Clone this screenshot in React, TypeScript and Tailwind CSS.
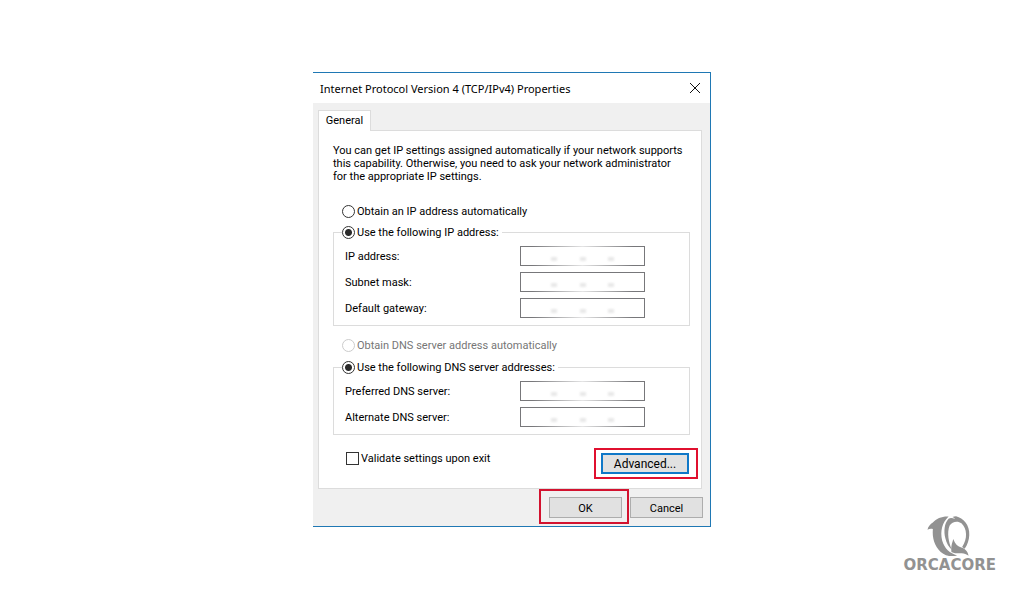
import { useState } from "react";
import clsx from "clsx";

type Smudge = "top" | "bottom" | "both";

interface FieldProps {
  id: string;
  label: string;
  smudge: Smudge;
}

const smudgeStyle =
  "pointer-events-none absolute h-[3px] bg-linear-to-r from-white/0 via-white/80 to-white/0";

const AddressField = ({ id, label, smudge }: FieldProps) => {
  const [value, setValue] = useState("");

  return (
    <div className="flex h-5 items-center">
      <label htmlFor={id} className="w-[175px]">
        {label}
      </label>
      <div className="relative h-5 w-[125px]">
        <input
          id={id}
          type="text"
          value={value}
          onChange={(e) => setValue(e.target.value)}
          className="block h-5 w-full border border-[#77777a] bg-white px-1 outline-none"
        />
        {/* erased octets */}
        <span className="pointer-events-none absolute inset-x-[31px] top-[11px] flex justify-between">
          <i className="h-1 w-1.5 bg-[#e8e8e8] blur-[1px]" />
          <i className="h-1 w-1.5 bg-[#e8e8e8] blur-[1px]" />
          <i className="h-1 w-1.5 bg-[#e8e8e8] blur-[1px]" />
        </span>
        {smudge !== "bottom" && (
          <span className={clsx(smudgeStyle, "inset-x-3 -top-px")} />
        )}
        {smudge !== "top" && (
          <span className={clsx(smudgeStyle, "inset-x-3 -bottom-px")} />
        )}
      </div>
    </div>
  );
};

interface RadioProps {
  id: string;
  name: string;
  label: string;
  defaultChecked?: boolean;
  disabled?: boolean;
}

const Radio = ({ id, name, label, defaultChecked, disabled }: RadioProps) => (
  <span className="flex h-3.5 items-center gap-0.5">
    <input
      id={id}
      name={name}
      type="radio"
      defaultChecked={defaultChecked}
      disabled={disabled}
      className="h-[13px] w-[13px] shrink-0 appearance-none rounded-full border border-[#333] bg-white checked:bg-[radial-gradient(circle,#2b2b2b_3px,transparent_4px)] disabled:border-[#ccc]"
    />
    <label
      htmlFor={id}
      className={clsx("whitespace-nowrap", disabled && "text-[#767676]")}
    >
      {label}
    </label>
  </span>
);

const Logo = () => (
  <div className="flex flex-col items-center text-[#929292]">
    <svg viewBox="0 0 168 137" className="h-[49px] w-15" fill="currentColor">
      <path d="M80 21C62 20 46 26 36 38C29 42 23 49 21 58C26 55 31 55 36 56C34 80 40 104 58 120C70 131 88 134 104 130C84 124 68 110 62 88C56 62 62 38 80 21Z" />
      <path d="M80 27C68 40 66 62 71 82C74 96 81 107 89 114C80 92 75 66 83 46C90 35 106 32 116 40C132 54 134 84 118 106L125 111C141 90 143 56 127 37C121 29 111 23 101 20C97 20 94 21 91 22C95 24 97 26 98 28C92 25 85 24 80 27Z" />
      <path d="M93 84C92 92 86 100 88 120C98 125 108 124 117 124C124 124 130 127 136 131C134 120 126 110 116 108C106 105 99 99 93 84Z" />
    </svg>
    <span className="font-['DejaVu_Sans'] text-[15px] leading-[14px] font-bold">
      ORCACORE
    </span>
  </div>
);

const buttonStyle = "h-[21px] bg-[#e1e1e1] pt-0.5 text-center";

const App = () => {
  return (
    <main className="grid min-h-screen grid-cols-[1fr_auto_1fr] bg-white pb-px font-['Roboto',sans-serif] text-[11px] leading-[13px] text-black">
      <section className="col-start-2 w-[398px] self-center border-y border-r border-[#1f78b4] bg-[#f0f0f0]">
        {/* TITLE BAR */}
        <header className="flex h-[30px] items-center justify-between bg-white pr-2.5 pl-[7px]">
          <h1 className="font-['Noto_Sans',sans-serif]">
            Internet Protocol Version 4 (TCP/IPv4) Properties
          </h1>
          <button type="button" aria-label="Close">
            <svg viewBox="0 0 10 10" className="h-2.5 w-2.5" stroke="#111">
              <path d="M0 0L10 10M10 0L0 10" />
            </svg>
          </button>
        </header>

        {/* TAB */}
        <div className="flex pt-[7px] pl-[5px]">
          <button
            type="button"
            className="relative -mb-px h-[21px] w-[53px] border border-b-0 border-[#dcdcdc] bg-white pb-0.5"
          >
            General
          </button>
        </div>

        {/* PANEL */}
        <div className="mr-2 ml-[5px] border border-[#dcdcdc] bg-white pt-[13px] pr-[11px] pb-[9px] pl-3.5">
          <p className="whitespace-nowrap">
            You can get IP settings assigned automatically if your network
            supports
            <br />
            this capability. Otherwise, you need to ask your network
            administrator
            <br />
            for the appropriate IP settings.
          </p>

          <div className="mt-[21px] pl-[9px]">
            <Radio id="ip-auto" name="ip" label="Obtain an IP address automatically" />
          </div>
          <fieldset className="mt-[7px] flex flex-col gap-1.5 border border-[#dcdcdc] py-[7px] pl-[11px]">
            <legend className="-ml-[3px] pr-[3px]">
              <Radio id="ip-manual" name="ip" label="Use the following IP address:" defaultChecked />
            </legend>
            <AddressField id="ip" label="IP address:" smudge="both" />
            <AddressField id="mask" label="Subnet mask:" smudge="bottom" />
            <AddressField id="gateway" label="Default gateway:" smudge="bottom" />
          </fieldset>

          <div className="mt-3 pl-[9px]">
            <Radio id="dns-auto" name="dns" label="Obtain DNS server address automatically" disabled />
          </div>
          <fieldset className="mt-2 flex flex-col gap-1.5 border border-[#dcdcdc] py-[7px] pl-[11px]">
            <legend className="-ml-[3px] pr-[3px]">
              <Radio id="dns-manual" name="dns" label="Use the following DNS server addresses:" defaultChecked />
            </legend>
            <AddressField id="dns1" label="Preferred DNS server:" smudge="both" />
            <AddressField id="dns2" label="Alternate DNS server:" smudge="bottom" />
          </fieldset>

          <div className="mt-[13px] -mr-2 flex items-start justify-between pl-[13px]">
            <div className="flex items-center gap-0.5 pt-1">
              <input
                id="validate"
                type="checkbox"
                className="h-[13px] w-[13px] appearance-none border border-[#333] bg-white checked:bg-[#333]"
              />
              <label htmlFor="validate">Validate settings upon exit</label>
            </div>
            <div className="border-2 border-[#e0102f] bg-white py-[3px] pr-[7px] pl-[5px]">
              <button
                type="button"
                className={clsx(buttonStyle, "block w-[88px] border-2 border-[#0f78c8] text-[12px]")}
              >
                Advanced...
              </button>
            </div>
          </div>
        </div>

        {/* ACTIONS */}
        <footer className="flex items-start justify-end gap-px pr-[7px] pb-0.5">
          <div className="border-2 border-[#d3122f] pt-1.5 pr-[5px] pb-1 pl-2">
            <button
              type="button"
              className={clsx(buttonStyle, "block w-[73px] border border-[#adadad]")}
            >
              OK
            </button>
          </div>
          <button
            type="button"
            className={clsx(buttonStyle, "mt-2 w-[73px] border border-[#adadad]")}
          >
            Cancel
          </button>
        </footer>
      </section>

      <div className="col-start-3 self-end justify-self-end pr-7 pb-[27px]">
        <Logo />
      </div>
    </main>
  );
};

export default App;
